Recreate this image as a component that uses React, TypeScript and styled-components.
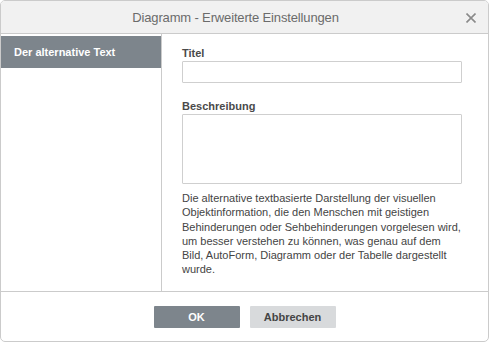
import React from 'react';
import styled, { createGlobalStyle } from 'styled-components';

const GlobalStyle = createGlobalStyle`
  html, body {
    margin: 0;
    padding: 0;
    background: #ffffff;
  }
  body {
    font-family: "Liberation Sans", Arial, sans-serif;
  }
`;

const App = () => {
  return (
    <>
      <GlobalStyle />
      <Dialog>
        <Header>
          <HeaderTitle>Diagramm - Erweiterte Einstellungen</HeaderTitle>
          <CloseButton aria-label="Schließen">
            <svg width="10" height="10" viewBox="0 0 10 10">
              <path d="M0.5 0.5 L9.5 9.5 M9.5 0.5 L0.5 9.5" stroke="#8a8a8a" strokeWidth="1.6" />
            </svg>
          </CloseButton>
        </Header>
        <Body>
          <Sidebar>
            <SideItem active>Der alternative Text</SideItem>
          </Sidebar>
          <Content>
            <Label>Titel</Label>
            <TextInput type="text" />
            <Label spaced>Beschreibung</Label>
            <TextArea />
            <Hint>
              Die alternative textbasierte Darstellung der visuellen Objektinformation, die den
              Menschen mit geistigen Behinderungen oder Sehbehinderungen vorgelesen wird, um besser
              verstehen zu können, was genau auf dem Bild, AutoForm, Diagramm oder der Tabelle
              dargestellt wurde.
            </Hint>
          </Content>
        </Body>
        <Footer>
          <Button primary>OK</Button>
          <Button>Abbrechen</Button>
        </Footer>
      </Dialog>
    </>
  );
};

export default App;


const Dialog = styled.div`
  width: 489px;
  height: 342px;
  box-sizing: border-box;
  border: 1px solid #cbcbcb;
  border-radius: 5px;
  background: #ffffff;
  display: flex;
  flex-direction: column;
  overflow: hidden;
`;

const Header = styled.div`
  position: relative;
  height: 33px;
  flex-shrink: 0;
  box-sizing: border-box;
  padding-right: 18px;
  background: #f1f1f1;
  border-bottom: 1px solid #cbcbcb;
  display: flex;
  align-items: center;
  justify-content: center;
`;

const HeaderTitle = styled.div`
  font-size: 13px;
  letter-spacing: -0.15px;
  color: #6b6b6b;
  margin-top: 1px;
`;

const CloseButton = styled.button`
  position: absolute;
  right: 11px;
  top: 11px;
  width: 12px;
  height: 12px;
  padding: 0;
  border: none;
  background: transparent;
  display: flex;
  align-items: center;
  justify-content: center;
  cursor: pointer;
`;

const Body = styled.div`
  height: 257px;
  flex-shrink: 0;
  display: flex;
  border-bottom: 1px solid #cbcbcb;
`;

const Sidebar = styled.div`
  width: 160px;
  flex-shrink: 0;
  padding-top: 2px;
  border-right: 1px solid #cbcbcb;
`;

const SideItem = styled.div<{ active?: boolean }>`
  height: 32px;
  display: flex;
  align-items: center;
  padding-left: 13px;
  font-size: 11px;
  font-weight: bold;
  color: ${(p) => (p.active ? '#ffffff' : '#444444')};
  background: ${(p) => (p.active ? '#7d858c' : 'transparent')};
`;

const Content = styled.div`
  flex: 1;
  padding: 12px 26px 0 20px;
  display: flex;
  flex-direction: column;
`;

const Label = styled.div<{ spaced?: boolean }>`
  font-size: 11px;
  font-weight: bold;
  line-height: 14px;
  color: #4a4a4a;
  margin-top: ${(p) => (p.spaced ? '16px' : '0')};
  margin-bottom: 1px;
`;

const TextInput = styled.input`
  width: 280px;
  height: 22px;
  box-sizing: border-box;
  border: 1px solid #cfcfcf;
  border-radius: 1px;
  margin: 0;
  outline: none;
`;

const TextArea = styled.textarea`
  width: 280px;
  height: 70px;
  box-sizing: border-box;
  border: 1px solid #cfcfcf;
  border-radius: 1px;
  margin: 0;
  resize: none;
  outline: none;
`;

const Hint = styled.div`
  width: 280px;
  margin-top: 7px;
  font-size: 11px;
  line-height: 1.3;
  color: #444444;
`;

const Footer = styled.div`
  flex: 1;
  display: flex;
  justify-content: center;
  align-items: flex-start;
  gap: 10px;
  padding-top: 14px;
`;

const Button = styled.button<{ primary?: boolean }>`
  width: 86px;
  height: 22px;
  border: none;
  border-radius: 1px;
  font-family: "Liberation Sans", Arial, sans-serif;
  font-size: 11px;
  font-weight: bold;
  cursor: pointer;
  color: ${(p) => (p.primary ? '#ffffff' : '#444444')};
  background: ${(p) => (p.primary ? '#7d858c' : '#d8dadc')};
`;
